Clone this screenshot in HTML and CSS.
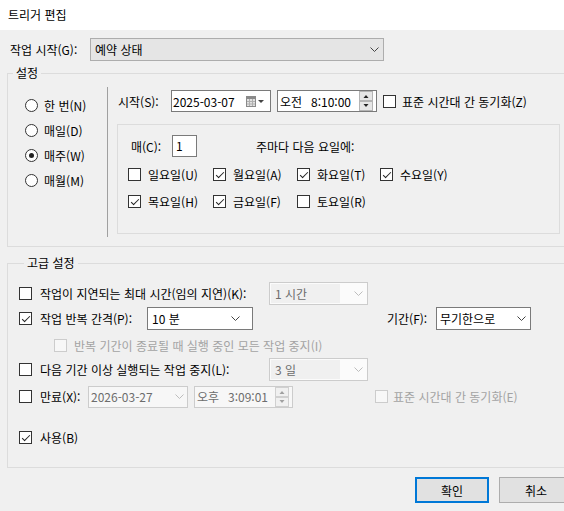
FILE: index.html
```html
<!DOCTYPE html>
<html lang="ko">
<head>
    <meta charset="UTF-8">
    <title>트리거 편집</title>
    <link rel="stylesheet" href="styles.css">
</head>
<body>
    <div class="titlebar">트리거 편집</div>

    <div class="dialog">
        <div class="begin-row">
            <span class="begin-label">작업 시작(G):</span>
            <div class="combo begin-combo">
                <span>예약 상태</span>
                <svg class="chev" width="9" height="5"><polyline points="0.5,0.5 4.5,4.5 8.5,0.5"/></svg>
            </div>
        </div>

        <fieldset class="group settings">
            <legend>설정</legend>
            <div class="sched">
                <div class="freq">
                    <div class="radio-row"><span class="radio"></span>한 번(N)</div>
                    <div class="radio-row"><span class="radio"></span>매일(D)</div>
                    <div class="radio-row"><span class="radio on"></span>매주(W)</div>
                    <div class="radio-row"><span class="radio"></span>매월(M)</div>
                </div>

                <div class="sched-main">
                    <div class="start-row">
                        <span class="start-label">시작(S):</span>
                        <div class="field date">
                            <span>2025-03-07</span>
                            <svg class="cal" width="19" height="11">
                                <rect x="0.5" y="0.5" width="9" height="10" fill="#e2e2e2" stroke="#8a8a8a"/>
                                <rect x="0" y="0" width="10" height="3" fill="#8a8a8a"/>
                                <path d="M3.5 3v7M6.5 3v7M1 5.5h8M1 8h8" stroke="#b0b0b0" stroke-width="1"/>
                                <polygon points="12,4 18,4 15,7" fill="#444"/>
                            </svg>
                        </div>
                        <div class="field time">
                            <span class="ampm">오전</span><span>8:10:00</span>
                            <svg class="spin" width="14" height="20">
                                <rect x="0.5" y="0.5" width="13" height="9" fill="#e6e6e6" stroke="#b4b4b4"/>
                                <rect x="0.5" y="10.5" width="13" height="9" fill="#e6e6e6" stroke="#b4b4b4"/>
                                <polygon points="4.5,7 9.5,7 7,4" fill="#222"/>
                                <polygon points="4.5,13 9.5,13 7,16" fill="#222"/>
                            </svg>
                        </div>
                        <span class="cb sync-cb"></span>
                        <span class="cb-text">표준 시간대 간 동기화(Z)</span>
                    </div>

                    <div class="weekly">
                        <div class="every-row">
                            <span class="every-label">매(C):</span>
                            <div class="num">1</div>
                            <span class="weekdays-label">주마다 다음 요일에:</span>
                        </div>
                        <div class="days">
                            <div class="day"><span class="cb"></span>일요일(U)</div>
                            <div class="day"><span class="cb on"></span>월요일(A)</div>
                            <div class="day"><span class="cb on"></span>화요일(T)</div>
                            <div class="day"><span class="cb on"></span>수요일(Y)</div>
                            <div class="day"><span class="cb on"></span>목요일(H)</div>
                            <div class="day"><span class="cb on"></span>금요일(F)</div>
                            <div class="day"><span class="cb"></span>토요일(R)</div>
                        </div>
                    </div>
                </div>
            </div>
        </fieldset>

        <fieldset class="group advanced">
            <legend>고급 설정</legend>

            <div class="adv-row r1">
                <span class="cb"></span>
                <span class="adv-label wide">작업이 지연되는 최대 시간(임의 지연)(K):</span>
                <div class="combo off short">
                    <span class="val">1 시간</span>
                    <svg class="chev" width="9" height="5"><polyline points="0.5,0.5 4.5,4.5 8.5,0.5"/></svg>
                </div>
            </div>

            <div class="adv-row r2">
                <span class="cb on"></span>
                <span class="adv-label repeat">작업 반복 간격(P):</span>
                <div class="combo edit repeat-combo">
                    <span>10 분</span>
                    <svg class="chev" width="9" height="5"><polyline points="0.5,0.5 4.5,4.5 8.5,0.5"/></svg>
                </div>
                <span class="dur-label">기간(F):</span>
                <div class="combo edit dur-combo">
                    <span>무기한으로</span>
                    <svg class="chev" width="9" height="5"><polyline points="0.5,0.5 4.5,4.5 8.5,0.5"/></svg>
                </div>
            </div>

            <div class="adv-row r3 muted">
                <span class="cb off"></span>
                <span class="cb-text">반복 기간이 종료될 때 실행 중인 모든 작업 중지(I)</span>
            </div>

            <div class="adv-row r4">
                <span class="cb"></span>
                <span class="adv-label wide">다음 기간 이상 실행되는 작업 중지(L):</span>
                <div class="combo off short">
                    <span class="val">3 일</span>
                    <svg class="chev" width="9" height="5"><polyline points="0.5,0.5 4.5,4.5 8.5,0.5"/></svg>
                </div>
            </div>

            <div class="adv-row r5">
                <span class="cb"></span>
                <span class="adv-label expire">만료(X):</span>
                <div class="field date off">
                    <span>2026-03-27</span>
                    <svg class="chev" width="9" height="5"><polyline points="0.5,0.5 4.5,4.5 8.5,0.5"/></svg>
                </div>
                <div class="field time off">
                    <span class="ampm">오후</span><span>3:09:01</span>
                    <svg class="spin" width="14" height="20">
                        <rect x="0.5" y="0.5" width="13" height="9" fill="#f0f0f0" stroke="#d0d0d0"/>
                        <rect x="0.5" y="10.5" width="13" height="9" fill="#f0f0f0" stroke="#d0d0d0"/>
                        <polygon points="4.5,7 9.5,7 7,4" fill="#a0a0a0"/>
                        <polygon points="4.5,13 9.5,13 7,16" fill="#a0a0a0"/>
                    </svg>
                </div>
                <span class="cb off expire-cb"></span>
                <span class="cb-text muted">표준 시간대 간 동기화(E)</span>
            </div>

            <div class="adv-row r6">
                <span class="cb on"></span>
                <span class="adv-label">사용(B)</span>
            </div>
        </fieldset>

        <div class="buttons">
            <div class="btn default">확인</div>
            <div class="btn">취소</div>
        </div>
    </div>
</body>
</html>
```

FILE: styles.css
```css
html, body { margin: 0; height: 100%; overflow: hidden; }
body { font-family: "Noto Sans CJK KR", "Noto Sans", sans-serif; font-size: 12px; color: #000; background: #f0f0f0; }

.titlebar { height: 30px; line-height: 30px; padding-left: 8px; background: #fff; }
.dialog { width: 582px; }

/* shared controls */
.cb { box-sizing: border-box; width: 13px; height: 13px; flex: none; border: 1px solid #333; background: #fff; display: inline-flex; align-items: center; justify-content: center; }
.cb.on::after { content: ""; width: 3px; height: 7px; border: solid #222; border-width: 0 1px 1px 0; transform: translate(0, -1px) rotate(45deg); }
.cb.off { border-color: #cccccc; background: #f7f7f7; }
.cb-text { margin-left: 7px; }
.muted { color: #a3a3a3; }

.radio { box-sizing: border-box; width: 13px; height: 13px; flex: none; border: 1px solid #333; border-radius: 50%; background: #fff; display: inline-flex; align-items: center; justify-content: center; }
.radio.on::after { content: ""; width: 5px; height: 5px; border-radius: 50%; background: #222; }

.combo { box-sizing: border-box; height: 23px; flex: none; display: flex; align-items: center; justify-content: space-between; padding: 0 4px; border: 1px solid #adadad; background: #e5e5e5; }
.combo.edit { border-color: #7a7a7a; background: #fff; }
.combo.off { border-color: #cccccc; background: #fbfbfb; color: #6d6d6d; padding: 0 4px 0 0; }
.combo.off .val { align-self: stretch; flex: 1; display: flex; align-items: center; padding-left: 4px; margin: 1px 14px 1px 1px; background: #f0f0f0; }
.chev { flex: none; fill: none; stroke: #444; stroke-width: 1; }
.off .chev { stroke: #bdbdbd; }

.field { box-sizing: border-box; width: 100px; height: 22px; flex: none; display: flex; align-items: center; border: 1px solid #7a7a7a; background: #fff; }
.field.off { border-color: #cccccc; background: #f7f7f7; color: #6d6d6d; }
.date { justify-content: space-between; padding: 0 5px 0 1px; }
.date.off { padding: 0 3px 0 2px; }
.time { padding: 0 3px 0 2px; }
.time .ampm { width: 31px; }
.time .spin { margin-left: auto; }

/* group boxes */
.group { margin: 0 7px; padding: 0; border: 1px solid #dcdcdc; min-width: 0; }
.group legend { margin-left: 5px; padding: 0 3px; line-height: 16px; }

.begin-row { display: flex; align-items: center; height: 23px; margin-top: 8px; padding-left: 10px; }
.begin-label { width: 80px; }
.begin-combo { width: 294px; }

.settings { margin-top: 4px; padding-bottom: 9px; }
.sched { display: flex; height: 150px; margin-top: 6px; }
.freq { box-sizing: border-box; width: 99px; padding: 6px 0 0 17px; }
.radio-row { display: flex; align-items: center; gap: 6px; height: 25px; }
.sched-main { border-left: 1px solid #a0a0a0; padding-left: 9px; }

.start-row { display: flex; align-items: center; height: 22px; margin-top: 3px; padding-left: 1px; }
.start-label { width: 53px; }
.start-row .time { margin-left: 6px; }
.sync-cb { margin-left: 6px; }
.start-row .cb-text { margin-left: 6px; }

.weekly { box-sizing: border-box; width: 443px; height: 110px; margin-top: 12px; border: 1px solid #dcdcdc; padding-left: 10px; }
.every-row { display: flex; align-items: center; height: 22px; margin-top: 10px; padding-left: 3px; }
.every-label { width: 41px; }
.num { box-sizing: border-box; width: 25px; height: 22px; line-height: 20px; padding-left: 3px; border: 1px solid #7a7a7a; background: #fff; }
.weekdays-label { margin-left: 59px; }
.days { display: grid; grid-template-columns: 85px 84px 83px 80px; grid-auto-rows: 27px; margin-top: 4px; }
.day { display: flex; align-items: center; gap: 7px; }

.advanced { margin-top: 8px; padding: 11px 0 18px 11px; }
.adv-row { display: flex; align-items: center; height: 23px; }
.r2 { margin-top: 2px; }
.r3 { margin-top: 4px; }
.r3 .cb { margin-left: 35px; }
.r4 { margin-top: 1px; }
.r5 { margin-top: 4px; }
.r6 { margin-top: 18px; }
.adv-label { margin-left: 8px; }
.adv-label.wide { width: 229px; }
.adv-label.repeat { width: 107px; }
.adv-label.expire { width: 48px; }
.short { width: 99px; }
.repeat-combo { width: 106px; padding: 0 12px 0 4px; }
.dur-label { width: 49px; margin-left: 134px; }
.dur-combo { width: 95px; padding: 0 4px 0 3px; }
.r5 .time { width: 99px; margin-left: 6px; }
.expire-cb { margin-left: 82px; }
.r5 .cb-text { margin-left: 5px; }

.buttons { display: flex; justify-content: flex-end; gap: 10px; margin-top: 9px; padding-right: 9px; }
.btn { box-sizing: border-box; width: 74px; height: 26px; display: flex; align-items: center; justify-content: center; border: 1px solid #adadad; background: #e1e1e1; }
.btn.default { border: 2px solid #0078d7; }
```
